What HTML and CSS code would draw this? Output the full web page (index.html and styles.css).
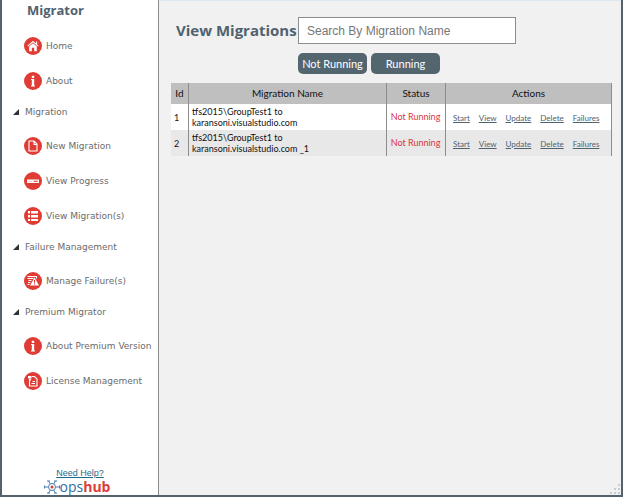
FILE: index.html
```
<!DOCTYPE html>
<html lang="en">
<head>
<meta charset="utf-8">
<title>Migrator</title>
<link rel="stylesheet" href="styles.css">
</head>
<body>
<div class="window">
  <aside class="sidebar">
    <h2 class="brand">Migrator</h2>
    <nav class="menu">
      <a class="item" href="#"><svg class="icon" viewBox="0 0 18 18"><circle cx="9" cy="9" r="9"/><path class="line" d="M3.8 9.2 9 4.6l5.2 4.6M12.6 4.5v3"/><path class="fill" d="M5.2 9.4 9 6.2l3.8 3.2v4.8h-2.6v-3.4H7.8v3.4H5.2z"/></svg>Home</a>
      <a class="item" href="#"><svg class="icon" viewBox="0 0 18 18"><circle cx="9" cy="9" r="9"/><path class="fill" d="M7.800 3.800h2.400V6H7.800zM7 7h3.200v6.400h.8v1H7v-1h.8V8H7z"/></svg>About</a>
      <button class="group" type="button"><svg class="arrow" viewBox="0 0 6 6"><path d="M6 0v6H0z"/></svg>Migration</button>
      <a class="item" href="#"><svg class="icon" viewBox="0 0 18 18"><circle cx="9" cy="9" r="9"/><path class="line" d="M5 4h5l3 3v7H5zM10 4v3.500h3"/></svg>New Migration</a>
      <a class="item" href="#"><svg class="icon" viewBox="0 0 18 18"><circle cx="9" cy="9" r="9"/><path class="fill" d="M3 7.500h12v3.500H3z"/><path class="cut" d="M9.500 8.700h4.300v1H9.500zM4.500 8.900h1v.7h-1zM6.500 8.900h1v.7h-1z"/></svg>View Progress</a>
      <a class="item" href="#"><svg class="icon" viewBox="0 0 18 18"><circle cx="9" cy="9" r="9"/><path class="fill" d="M4 4h2v2.500H4zM7 4h7v2.500H7zM4 8h2v2.500H4zM7 8h7v2.500H7zM4 12h2v2H4zM7 12h7v2H7z"/></svg>View Migration(s)</a>
      <button class="group" type="button"><svg class="arrow" viewBox="0 0 6 6"><path d="M6 0v6H0z"/></svg>Failure Management</button>
      <a class="item" href="#"><svg class="icon" viewBox="0 0 18 18"><circle cx="9" cy="9" r="9"/><path class="line" d="M3.500 4.500h9v2M3.500 6.500h6M4.500 8.500h3M4 10.500h2.500M3.500 12.500h2"/><path class="fill" d="M10.500 5.500 15 13.500H6z"/><path class="cut" d="M10 8h1v2.700h-1zM10 11.500h1v1h-1z"/></svg>Manage Failure(s)</a>
      <button class="group" type="button"><svg class="arrow" viewBox="0 0 6 6"><path d="M6 0v6H0z"/></svg>Premium Migrator</button>
      <a class="item" href="#"><svg class="icon" viewBox="0 0 18 18"><circle cx="9" cy="9" r="9"/><path class="fill" d="M7.800 3.800h2.400V6H7.800zM7 7h3.200v6.400h.8v1H7v-1h.8V8H7z"/></svg>About Premium Version</a>
      <a class="item" href="#"><svg class="icon" viewBox="0 0 18 18"><circle cx="9" cy="9" r="9"/><path class="line" d="M5.500 8v6h7.500V7l-2.500-2.500H8M7.500 11.500h3.500M8.500 9.500h2.500"/><path class="fill" d="M4 4h3.500v2.500H4zM5 7h2v1.500H5z"/></svg>License Management</a>
    </nav>
    <footer class="foot">
      <a class="help" href="#">Need Help?</a>
      <div class="logo"><svg class="mark" viewBox="0 0 16 16"><g class="spokes"><path d="M0 8h4M12 8h4M4.500 2l1.800 3M11.500 2 9.700 5M4.500 14l1.800-3M11.500 14l-1.800-3"/><circle cx="8" cy="8" r="3.500"/></g><path class="tips" d="M0 6.500h1v3H0zM15 6.500h1v3h-1zM3 1.500h3v1H3zM10 1.500h3v1h-3zM3 13.500h3v1H3zM10 13.500h3v1h-3z"/><circle class="core" cx="8" cy="8" r="1.500"/></svg><span class="ops">ops</span><b class="hub">hub</b></div>
    </footer>
  </aside>
  <main class="main">
    <header class="top">
      <h1 class="title">View Migrations</h1>
      <input class="search" type="search" placeholder="Search By Migration Name" aria-label="Search By Migration Name">
      <div class="filters">
        <button class="filter" type="button">Not Running</button>
        <button class="filter" type="button">Running</button>
      </div>
    </header>
    <table class="grid">
      <colgroup><col class="c-id"><col class="c-name"><col class="c-status"><col class="c-actions"></colgroup>
      <thead><tr><th>Id</th><th>Migration Name</th><th>Status</th><th>Actions</th></tr></thead>
      <tbody>
        <tr><td>1</td><td>tfs2015\GroupTest1 to<br>karansoni.visualstudio.com</td><td class="status">Not Running</td><td><div class="actions"><a href="#">Start</a><a href="#">View</a><a href="#">Update</a><a href="#">Delete</a><a href="#">Failures</a></div></td></tr>
        <tr><td>2</td><td>tfs2015\GroupTest1 to<br>karansoni.visualstudio.com _1</td><td class="status">Not Running</td><td><div class="actions"><a href="#">Start</a><a href="#">View</a><a href="#">Update</a><a href="#">Delete</a><a href="#">Failures</a></div></td></tr>
      </tbody>
    </table>
    <svg class="grip" viewBox="0 0 10 10"><path d="M8 0h2v2H8zM8 4h2v2H8zM8 8h2v2H8zM4 4h2v2H4zM4 8h2v2H4zM0 8h2v2H0z"/></svg>
  </main>
</div>
</body>
</html>
```
FILE: styles.css
```
* { box-sizing: border-box; }
body { margin: 0; background: #fff; }
.window {
  display: flex;
  height: calc(100vh - 1px);
  border: solid #56626b;
  border-width: 0 2px 2px;
}
.sidebar {
  display: flex;
  flex-direction: column;
  flex: 0 0 157px;
  border-right: 1px solid #8c8c8c;
  background: #fff;
  font-family: "DejaVu Sans", sans-serif;
  font-size: 9px;
  color: #6b6b6b;
}
.brand {
  margin: 0;
  padding-left: 25px;
  height: 28px;
  font: bold 13px/20px "Open Sans", sans-serif;
  color: #4f626f;
}
.menu { display: flex; flex-direction: column; }
.item {
  display: flex;
  align-items: center;
  gap: 4px;
  height: 35px;
  padding-left: 22px;
  color: inherit;
  text-decoration: none;
  white-space: nowrap;
}
.icon { flex: none; width: 18px; height: 18px; }
.icon circle, .icon .cut { fill: #e03c36; }
.icon .fill { fill: #fff; }
.icon .line { fill: none; stroke: #fff; stroke-width: 1.1; }
.group {
  display: flex;
  align-items: center;
  gap: 6px;
  height: 30px;
  padding: 0 0 2px 11px;
  border: 0;
  background: none;
  font: inherit;
  color: inherit;
}
.arrow { width: 6px; height: 6px; fill: #333; }
.foot {
  display: flex;
  flex-direction: column;
  align-items: center;
  margin-top: auto;
}
.help { font: 9px/12px "Liberation Sans", sans-serif; color: #1d6a8c; }
.logo {
  display: flex;
  align-items: center;
  padding-right: 6px;
  font: 14px/16px "Open Sans", sans-serif;
}
.mark { width: 16px; height: 16px; }
.spokes { fill: none; stroke: #4a7fb0; stroke-width: 1; }
.tips { fill: #4a7fb0; }
.core { fill: #e03c36; }
.ops { color: #2f6da3; }
.hub { color: #e03c36; }
.main {
  position: relative;
  flex: 1;
  min-width: 0;
  padding: 16px 9px 0 12px;
  border-top: 1px solid #dce8f0;
  background: #f1f1f1;
  font-family: Lato, sans-serif;
}
.top {
  display: grid;
  grid-template-columns: 122px minmax(0, 218px);
  gap: 9px 0;
  margin-left: 5px;
}
.title {
  margin: 0;
  font: bold 15px/26px "Open Sans", sans-serif;
  color: #4f626f;
  white-space: nowrap;
}
.search {
  appearance: none;
  width: 100%;
  height: 27px;
  margin: 0;
  padding: 0 8px;
  border: 1px solid #8c8c8c;
  background: #fff;
  font: 12px "Liberation Sans", sans-serif;
}
.search::placeholder { color: #777; }
.filters { grid-column: 2; display: flex; gap: 4px; }
.filter {
  width: 69px;
  height: 21px;
  padding: 0;
  border: 0;
  border-radius: 5px;
  background: #53656f;
  font: 11px Lato, sans-serif;
  color: #fff;
}
.grid {
  width: 100%;
  margin-top: 9px;
  border-collapse: separate;
  border-spacing: 0;
  table-layout: fixed;
  font-size: 9px;
  line-height: 11px;
  color: #111;
}
.c-id { width: 18px; }
.c-name { width: 198px; }
.c-status { width: 59px; }
.grid th {
  height: 21px;
  padding: 0;
  background: #bfbfbf;
  font-size: 10px;
  font-weight: 400;
}
.grid td { height: 26px; padding: 2px 3px; background: #fff; }
.grid th, .grid td { border-right: 1px solid #8c8c8c; }
.grid tr:nth-child(2) td { background: #e8e8e8; }
.grid .status { padding: 0 1px 2px 0; text-align: center; color: #d9363c; }
.actions { display: flex; gap: 9px; padding: 2px 0 0 4px; font-size: 8px; }
.actions a { color: #4f626f; }
.grip {
  position: absolute;
  right: 1px;
  bottom: 1px;
  width: 10px;
  height: 10px;
  fill: #c5ccd3;
}
```
